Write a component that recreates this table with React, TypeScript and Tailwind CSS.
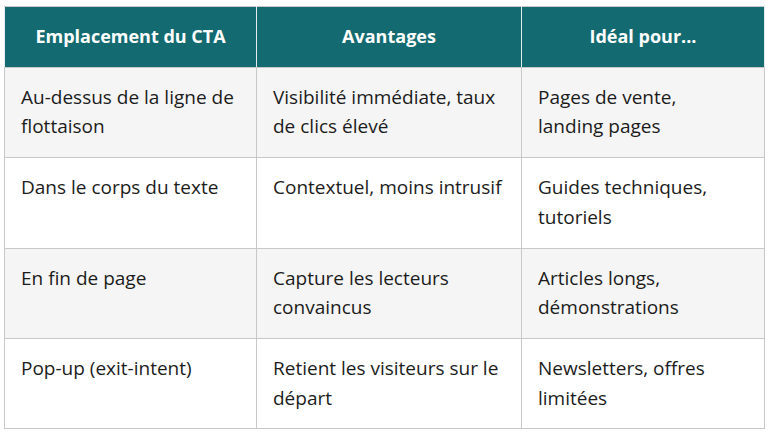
const rows = [
  ["Au-dessus de la ligne de flottaison", "Visibilité immédiate, taux de clics élevé", "Pages de vente, landing pages"],
  ["Dans le corps du texte", "Contextuel, moins intrusif", "Guides techniques, tutoriels"],
  ["En fin de page", "Capture les lecteurs convaincus", "Articles longs, démonstrations"],
  ["Pop-up (exit-intent)", "Retient les visiteurs sur le départ", "Newsletters, offres limitées"],
];

const headers = ["Emplacement du CTA", "Avantages", "Idéal pour..."];

export default function App() {
  return (
    <div className="h-[434px] w-[768px] bg-white pl-[4px] pt-[6px] font-['Open_Sans',sans-serif]">
      <table className="w-[760px] table-fixed border-collapse border border-[#c8c8c8] text-[19px] leading-[29.7px] text-[#1c1c1c]">
        <colgroup>
          <col className="w-[252px]" />
          <col className="w-[265px]" />
          <col className="w-[243px]" />
        </colgroup>
        <thead>
          <tr className="bg-[#136a70] text-white">
            {headers.map((h) => (
              <th
                key={h}
                className="border border-[#c8c8c8] border-x-[#e4eded] px-4 py-[15px] text-center text-[18px] font-bold"
              >
                {h}
              </th>
            ))}
          </tr>
        </thead>
        <tbody>
          {rows.map((row, i) => (
            <tr key={row[0]} className={i % 2 === 0 ? "bg-[#f5f5f5]" : "bg-white"}>
              {row.map((cell, j) => (
                <td
                  key={cell}
                  className={`border border-[#c8c8c8] py-[15px] pl-4 align-top ${j === 2 ? "pr-5" : "pr-4"}`}
                >
                  {cell}
                </td>
              ))}
            </tr>
          ))}
        </tbody>
      </table>
    </div>
  );
}
